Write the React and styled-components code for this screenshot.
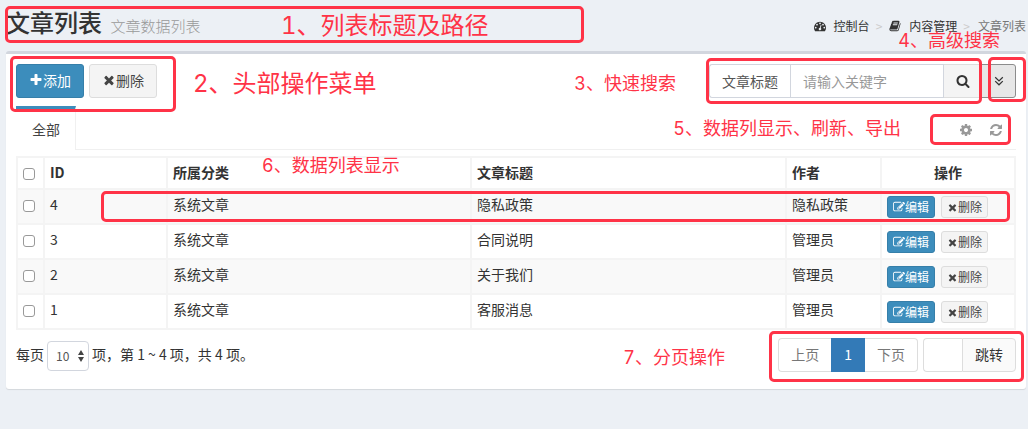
import { useState } from "react";
import styled, { createGlobalStyle, css } from "styled-components";

const articles = [
  { id: 4, category: "系统文章", title: "隐私政策", author: "隐私政策" },
  { id: 3, category: "系统文章", title: "合同说明", author: "管理员" },
  { id: 2, category: "系统文章", title: "关于我们", author: "管理员" },
  { id: 1, category: "系统文章", title: "客服消息", author: "管理员" },
];

const icons = {
  plus: "M1600 736v192q0 40-28 68t-68 28h-416v416q0 40-28 68t-68 28h-192q-40 0-68-28t-28-68v-416h-416q-40 0-68-28t-28-68v-192q0-40 28-68t68-28h416v-416q0-40 28-68t68-28h192q40 0 68 28t28 68v416h416q40 0 68 28t28 68z",
  close: "M1490 1322q0 40-28 68l-136 136q-28 28-68 28t-68-28l-294-294-294 294q-28 28-68 28t-68-28l-136-136q-28-28-28-68t28-68l294-294-294-294q-28-28-28-68t28-68l136-136q28-28 68-28t68 28l294 294 294-294q28-28 68-28t68 28l136 136q28 28 28 68t-28 68l-294 294 294 294q28 28 28 68z",
  search: "M1216 832q0-185-131.5-316.5t-316.5-131.5-316.5 131.5-131.5 316.5 131.5 316.5 316.5 131.5 316.5-131.5 131.5-316.5zm512 832q0 52-38 90t-90 38q-54 0-90-38l-343-342q-179 124-399 124-143 0-273.5-55.5t-225-150-150-225-55.5-273.5 55.5-273.5 150-225 225-150 273.5-55.5 273.5 55.5 225 150 150 225 55.5 273.5q0 220-124 399l343 343q37 37 37 90z",
  cog: "M1152 896q0-106-75-181t-181-75-181 75-75 181 75 181 181 75 181-75 75-181zm512-109v222q0 12-8 23t-20 13l-185 28q-19 54-39 91 35 50 107 138 10 12 10 25t-9 23q-27 37-99 108t-94 71q-12 0-26-9l-138-108q-44 23-91 38-16 136-29 186-7 28-36 28h-222q-14 0-24.5-8.5t-11.5-21.5l-28-184q-49-16-90-37l-141 107q-10 9-25 9-14 0-25-11-126-114-165-168-7-10-7-23 0-12 8-23 15-21 51-66.5t54-70.5q-27-50-41-99l-183-27q-13-2-21-12.5t-8-23.5v-222q0-12 8-23t19-13l186-28q14-46 39-92-40-57-107-138-10-12-10-24 0-10 9-23 26-36 98.5-107.5t94.5-71.5q13 0 26 10l138 107q44-23 91-38 16-136 29-186 7-28 36-28h222q14 0 24.5 8.5t11.5 21.5l28 184q49 16 90 37l142-107q9-9 24-9 13 0 25 10 129 119 165 170 7 8 7 22 0 12-8 23-15 21-51 66.5t-54 70.5q26 50 41 98l183 28q13 2 21 12.5t8 23.5z",
  refresh: "M1639 1056q0 5-1 7-64 268-268 434.5t-478 166.5q-146 0-282.5-55t-243.5-157l-129 129q-19 19-45 19t-45-19-19-45v-448q0-26 19-45t45-19h448q26 0 45 19t19 45-19 45l-137 137q71 66 161 102t187 36q134 0 250-65t186-179q11-17 53-117 8-23 30-23h192q13 0 22.5 9.5t9.5 22.5zm25-800v448q0 26-19 45t-45 19h-448q-26 0-45-19t-19-45 19-45l138-138q-148-137-349-137-134 0-250 65t-186 179q-11 17-53 117-8 23-30 23h-199q-13 0-22.5-9.5t-9.5-22.5v-7q65-268 270-434.5t480-166.5q146 0 284 55.5t245 156.5l130-129q19-19 45-19t45 19 19 45z",
  edit: "M888 1184l116-116-152-152-116 116v56h96v96h56zm440-720q-16-16-33 1l-350 350q-17 17-1 33t33-1l350-350q17-17 1-33zm80 594v190q0 119-84.5 203.5t-203.5 84.5h-832q-119 0-203.5-84.5t-84.5-203.5v-832q0-119 84.5-203.5t203.5-84.5h832q63 0 117 25 15 7 18 23 3 17-9 29l-49 49q-14 14-32 8-23-6-45-6h-832q-66 0-113 47t-47 113v832q0 66 47 113t113 47h832q66 0 113-47t47-113v-126q0-13 9-22l64-64q15-15 35-7t20 29zm-96-738l288 288-672 672h-288v-288zm444 132l-92 92-288-288 92-92q28-28 68-28t68 28l152 152q28 28 28 68t-28 68z",
  dashboard: "M384 1152q0-53-37.5-90.5t-90.5-37.5-90.5 37.5-37.5 90.5 37.5 90.5 90.5 37.5 90.5-37.5 37.5-90.5zm192-448q0-53-37.5-90.5t-90.5-37.5-90.5 37.5-37.5 90.5 37.5 90.5 90.5 37.5 90.5-37.5 37.5-90.5zm428 481l101-382q6-26-7.5-48.5t-38.5-29.5-48 6.5-30 39.5l-101 382q-60 5-107 43.5t-63 98.5q-20 77 20 146t117 89 146-20 89-117q16-60-6-117t-72-91zm660-33q0-53-37.5-90.5t-90.5-37.5-90.5 37.5-37.5 90.5 37.5 90.5 90.5 37.5 90.5-37.5 37.5-90.5zm-640-640q0-53-37.5-90.5t-90.5-37.5-90.5 37.5-37.5 90.5 37.5 90.5 90.5 37.5 90.5-37.5 37.5-90.5zm448 192q0-53-37.5-90.5t-90.5-37.5-90.5 37.5-37.5 90.5 37.5 90.5 90.5 37.5 90.5-37.5 37.5-90.5zm320 448q0 261-141 483-19 29-54 29h-1402q-35 0-54-29-141-221-141-483 0-182 71-348t191-286 286-191 348-71 348 71 286 191 191 286 71 348z",
  book: "M1703 478q40 57 18 129l-275 906q-19 64-76.5 107.5t-122.5 43.5h-923q-77 0-148.5-53.5t-99.5-131.5q-24-67-2-127 0-4 3-27t4-37q1-8-3-21.5t-3-19.5q2-11 8-21t16.5-23.5 16.5-23.5q23-38 45-91.5t30-91.5q3-10 .5-30t-.5-28q3-11 17-28t17-23q21-36 42-92t25-90q1-9-2.5-32t.5-28q4-13 22-30.5t22-22.5q19-26 42.5-84.5t27.5-96.5q1-8-3-25.5t-2-26.5q2-8 9-18t18-23 17-21q8-12 16.5-30.5t15-35 16-36 19.5-32 26.5-23.5 36-11.5 47.5 5.5l-1 3q38-9 51-9h761q74 0 114 56t18 130l-274 906q-36 119-71.5 153.5t-128.5 34.5h-869q-27 0-38 15-11 16-1 43 24 70 144 70h923q29 0 56-15.5t35-41.5l300-987q7-22 5-57 38 15 59 43zm-1064 2q-4 13 2 22.5t20 9.5h608q13 0 25.5-9.5t16.5-22.5l21-64q4-13-2-22.5t-20-9.5h-608q-13 0-25.5 9.5t-16.5 22.5zm-83 256q-4 13 2 22.5t20 9.5h608q13 0 25.5-9.5t16.5-22.5l21-64q4-13-2-22.5t-20-9.5h-608q-13 0-25.5 9.5t-16.5 22.5z",
};

function Icon({ name, size = 14 }) {
  return (
    <svg width={size} height={size} viewBox="0 0 1792 1792" fill="currentColor" aria-hidden="true">
      <path d={icons[name]} />
    </svg>
  );
}

function ArticleTable() {
  const [checked, setChecked] = useState([]);

  function toggle(id) {
    setChecked(checked.includes(id) ? checked.filter((item) => item !== id) : [...checked, id]);
  }

  function toggleAll() {
    setChecked(checked.length === articles.length ? [] : articles.map((article) => article.id));
  }

  return (
    <Table>
      <colgroup>
        <Col $width="27px" />
        <Col $width="123px" />
        <Col $width="304px" />
        <col />
        <Col $width="95px" />
        <Col $width="134px" />
      </colgroup>
      <thead>
        <tr>
          <th>
            <Checkbox
              aria-label="全选"
              checked={checked.length === articles.length}
              onChange={toggleAll}
            />
          </th>
          <th>ID</th>
          <th>所属分类</th>
          <th>文章标题</th>
          <th>作者</th>
          <th className="center">操作</th>
        </tr>
      </thead>
      <tbody>
        {articles.map((article) => (
          <tr key={article.id}>
            <td>
              <Checkbox
                aria-label={`选择 ${article.id}`}
                checked={checked.includes(article.id)}
                onChange={() => toggle(article.id)}
              />
            </td>
            <td>{article.id}</td>
            <td>{article.category}</td>
            <td>{article.title}</td>
            <td>{article.author}</td>
            <td className="actions">
              <Actions>
                <Button $small $primary><Icon name="edit" size={12} />编辑</Button>
                <Button $small><Icon name="close" size={11} />删除</Button>
              </Actions>
            </td>
          </tr>
        ))}
      </tbody>
    </Table>
  );
}

function Notes() {
  return (
    <>
      <Frame $left="5px" $top="6px" $width="579px" $height="37px" />
      <Note $left="281px" $top="8px" $large>1、列表标题及路径</Note>
      <Frame $left="10px" $top="56px" $width="166px" $height="56px" />
      <Note $left="193px" $top="66px" $large>2、头部操作菜单</Note>
      <Frame $right="46px" $top="58px" $width="276px" $height="46px" />
      <Note $right="352px" $top="71px">3、快速搜索</Note>
      <Frame $right="2px" $top="57px" $width="38px" $height="45px" />
      <Note $right="28px" $top="28px">4、高级搜索</Note>
      <Frame $right="17px" $top="114px" $width="81px" $height="31px" />
      <Note $right="127px" $top="116px">5、数据列显示、刷新、导出</Note>
      <Frame $left="101px" $right="18px" $top="191px" $height="31px" />
      <Note $left="262px" $top="153px">6、数据列表显示</Note>
      <Frame $right="4px" $top="331px" $width="255px" $height="51px" />
      <Note $right="303px" $top="345px">7、分页操作</Note>
    </>
  );
}

function App() {
  return (
    <Page>
      <GlobalStyle />
      <Header>
        <h1>文章列表 <small>文章数据列表</small></h1>
        <Breadcrumb aria-label="路径">
          <a href="#console"><Icon name="dashboard" />控制台</a>
          <span className="sep">&gt;</span>
          <a href="#content"><Icon name="book" />内容管理</a>
          <span className="sep">&gt;</span>
          <span className="current">文章列表</span>
        </Breadcrumb>
      </Header>

      <Box>
        <Toolbar>
          <Button $primary><Icon name="plus" />添加</Button>
          <Button><Icon name="close" />删除</Button>
          <SearchGroup>
            <label htmlFor="keyword">文章标题</label>
            <input id="keyword" type="text" placeholder="请输入关键字" />
            <button className="search" aria-label="搜索"><Icon name="search" /></button>
            <button className="more" aria-label="高级搜索">
              <svg width="10" height="10" viewBox="0 0 10 10" fill="none" stroke="currentColor" strokeWidth="1.2">
                <path d="M1.2 1.2 5 4.9 8.8 1.2M1.2 5.1 5 8.8 8.8 5.1" />
              </svg>
            </button>
          </SearchGroup>
        </Toolbar>

        <Tabs>
          <a href="#all">全部</a>
          <TabTools>
            <button aria-label="数据列显示"><Icon name="cog" /></button>
            <button aria-label="刷新"><Icon name="refresh" /></button>
          </TabTools>
        </Tabs>

        <ArticleTable />

        <Footer>
          <PageSize>
            <label htmlFor="pageSize">每页</label>
            <span className="select">
              <select id="pageSize" defaultValue="10">
                <option>10</option>
                <option>20</option>
                <option>50</option>
              </select>
              <svg width="6" height="12" viewBox="0 0 6 12" fill="#444" aria-hidden="true">
                <path d="M3 0 6 5H0zM3 12 0 7h6z" />
              </svg>
            </span>
            <span>项，第 1 ~ 4 项，共 4 项。</span>
          </PageSize>
          <Pagination>
            <button>上页</button>
            <button className="active">1</button>
            <button>下页</button>
          </Pagination>
          <Jump>
            <input type="text" aria-label="页码" />
            <button>跳转</button>
          </Jump>
        </Footer>
      </Box>

      <Notes />
    </Page>
  );
}

export default App;

const GlobalStyle = createGlobalStyle`
  * {
    box-sizing: border-box;
  }

  body {
    margin: 0;
    background-color: #ecf0f5;
  }

  body, button, input, select {
    font-family: "Noto Sans CJK SC", sans-serif;
    font-size: 14px;
    line-height: 20px;
    color: #333333;
  }

  button {
    cursor: pointer;
  }

  svg {
    display: block;
    flex-shrink: 0;
  }

  a {
    color: inherit;
    text-decoration: none;
  }
`;

const Page = styled.div`
  position: relative;
  min-height: 100vh;
  padding: 0 2px 0 6px;
`;

const Header = styled.header`
  display: flex;
  justify-content: space-between;
  height: 51px;

  h1 {
    margin: 0;
    padding-top: 7px;
    font-weight: 500;
    font-size: 24px;
    line-height: 30px;
  }

  small {
    margin-left: 3px;
    font-weight: 300;
    font-size: 15px;
    color: #999999;
  }
`;

const Breadcrumb = styled.nav`
  display: flex;
  align-items: center;
  height: 20px;
  margin-top: 16px;
  font-size: 12px;

  a {
    display: flex;
    align-items: center;
    gap: 7px;
  }

  svg {
    width: 14px;
    height: 12px;
  }

  .sep {
    padding: 0 6px;
    color: #cccccc;
  }

  .current {
    padding-left: 2px;
    color: #777777;
  }
`;

const Box = styled.main`
  padding: 10px 10px 17px;
  background-color: #ffffff;
  border-top: 3px solid #d2d6de;
  border-radius: 3px;
  box-shadow: 0 1px 1px rgba(0, 0, 0, 0.1);
`;

const Toolbar = styled.div`
  display: flex;
  gap: 5px;
`;

const Button = styled.button`
  display: flex;
  align-items: center;
  height: 34px;
  padding: 0 12px 2px;
  border: 1px solid #dddddd;
  border-radius: 3px;
  background-color: #f4f4f4;
  color: #444444;

  ${({ $primary }) => $primary && css`
    border-color: #367fa9;
    background-color: #3c8dbc;
    color: #ffffff;
  `}

  ${({ $small }) => $small && css`
    height: 22px;
    padding: 0 5px;
    font-size: 12px;
    line-height: 18px;
  `}
`;

const SearchGroup = styled.div`
  display: flex;
  height: 34px;
  margin-left: auto;

  label {
    padding: 6px 12px;
    border: 1px solid #d2d6de;
    border-right: none;
    border-radius: 3px 0 0 3px;
    color: #555555;
  }

  input {
    width: 154px;
    padding: 0 12px;
    border: 1px solid #d2d6de;
    border-radius: 0;
  }

  input::placeholder {
    color: #999999;
  }

  button {
    display: flex;
    align-items: center;
    justify-content: center;
    padding: 0;
    border: 1px solid #dddddd;
    background-color: #f4f4f4;
  }

  .search {
    width: 37px;
    border-left: none;
    border-right: none;
  }

  .more {
    width: 35px;
    border-color: #8c8c8c;
    border-radius: 0 3px 3px 0;
    background-color: #e7e7e7;
  }
`;

const Tabs = styled.div`
  display: flex;
  justify-content: space-between;
  height: 44px;
  margin: 8px 0 6px;
  border-bottom: 1px solid #f0f0f0;

  a {
    height: 44px;
    padding: 10px 15px 10px 16px;
    border-top: 3px solid #3c8dbc;
    border-right: 1px solid #f0f0f0;
    background-color: #ffffff;
    color: #444444;
  }
`;

const TabTools = styled.div`
  display: flex;
  align-items: center;
  gap: 16px;
  padding: 5px 13px 0 0;

  button {
    padding: 0;
    border: none;
    background: none;
    color: #999999;
  }
`;

const Table = styled.table`
  width: 100%;
  table-layout: fixed;
  border-collapse: collapse;

  th, td {
    height: 35px;
    padding: 4px 5px;
    border: 2px solid #f4f4f4;
    text-align: left;
    vertical-align: top;
  }

  th {
    height: 32px;
    font-weight: 700;
  }

  .center {
    text-align: center;
  }

  .actions {
    padding: 6px 5px 5px;
  }

  tbody tr:nth-child(odd) {
    background-color: #f9f9f9;
  }
`;

const Col = styled.col`
  width: ${({ $width }) => $width};
`;

const Checkbox = styled.input.attrs({ type: "checkbox" })`
  display: block;
  appearance: none;
  width: 12px;
  height: 12px;
  margin: 6px 0 0;
  border: 1px solid #999999;
  border-radius: 3px;
  background-color: #ffffff;

  &:checked {
    background-color: #3c8dbc;
  }
`;

const Actions = styled.div`
  display: flex;
  gap: 6px;
`;

const Footer = styled.div`
  display: flex;
  align-items: flex-start;
  gap: 5px;
  margin-top: 8px;
`;

const PageSize = styled.div`
  display: flex;
  align-items: flex-start;
  gap: 3px;
  height: 34px;
  margin-right: auto;
  padding-top: 3px;
  line-height: 26px;

  .select {
    position: relative;
  }

  select {
    display: block;
    appearance: none;
    width: 42px;
    height: 30px;
    padding: 0 8px;
    border: 1px solid #d2d6de;
    border-radius: 4px;
    background-color: #ffffff;
    font-size: 12px;
    color: #555555;
  }

  .select svg {
    position: absolute;
    top: 9px;
    right: 5px;
    pointer-events: none;
  }
`;

const Pagination = styled.nav`
  display: flex;

  button {
    height: 34px;
    padding: 0 12px 2px;
    border: 1px solid #dddddd;
    background-color: #ffffff;
    color: #777777;
  }

  button:first-child {
    border-right: none;
    border-radius: 4px 0 0 4px;
  }

  button:last-child {
    border-left: none;
    border-radius: 0 4px 4px 0;
  }

  .active {
    border-color: #337ab7;
    background-color: #337ab7;
    color: #ffffff;
  }
`;

const Jump = styled.div`
  display: flex;

  input {
    width: 39px;
    height: 34px;
    border: 1px solid #dddddd;
    border-right: none;
    border-radius: 4px 0 0 4px;
  }

  button {
    height: 34px;
    padding: 0 12px 2px;
    border: 1px solid #dddddd;
    border-radius: 0 4px 4px 0;
    background-color: #fafafa;
  }
`;

// red guide marks drawn over the page
const Frame = styled.div`
  position: absolute;
  top: ${({ $top }) => $top};
  left: ${({ $left }) => $left};
  right: ${({ $right }) => $right};
  width: ${({ $width }) => $width};
  height: ${({ $height }) => $height};
  border: 3px solid #ff3347;
  border-radius: 5px;
  pointer-events: none;
`;

const Note = styled.span`
  position: absolute;
  top: ${({ $top }) => $top};
  left: ${({ $left }) => $left};
  right: ${({ $right }) => $right};
  font-family: Inter, "Noto Sans CJK SC", sans-serif;
  font-size: ${({ $large }) => ($large ? "24px" : "18px")};
  font-variant-numeric: tabular-nums;
  line-height: ${({ $large }) => ($large ? "36px" : "26px")};
  white-space: nowrap;
  color: #ff3347;
  pointer-events: none;
`;
